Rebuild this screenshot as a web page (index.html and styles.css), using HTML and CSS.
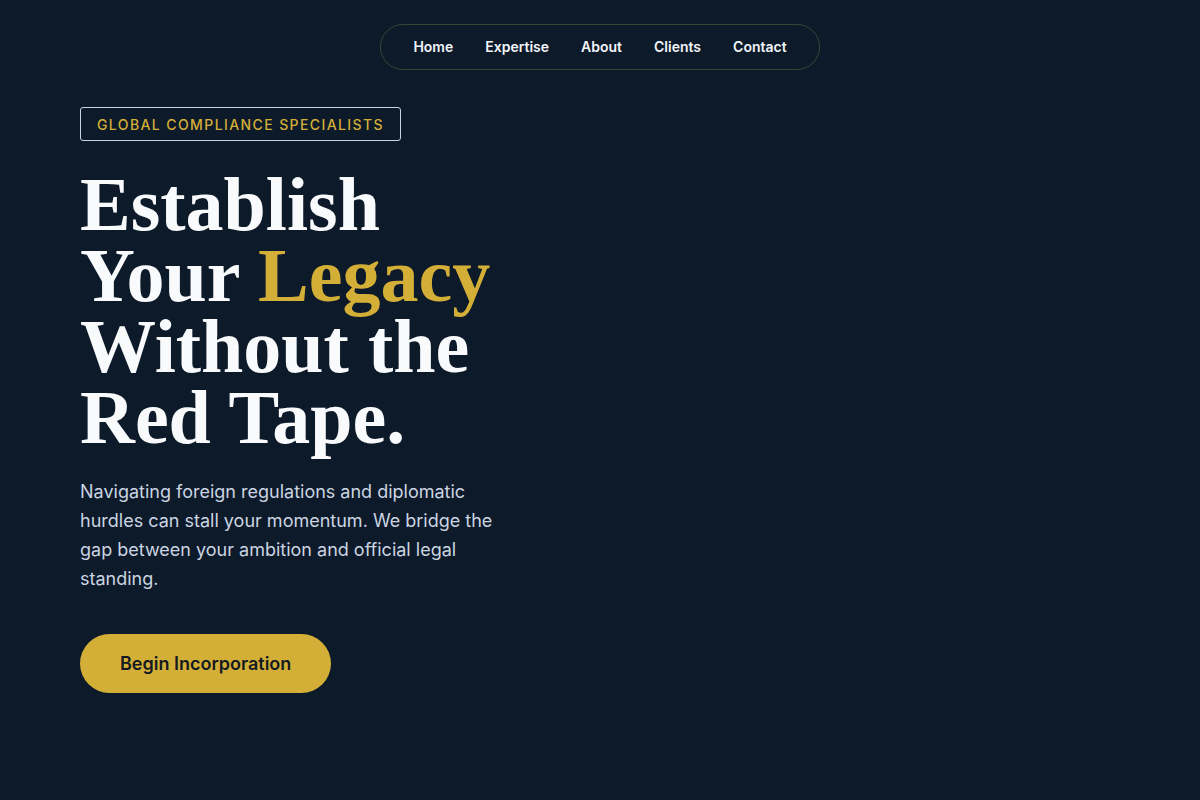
FILE: index.html
```html
<!DOCTYPE html>
<html lang="en">
<head>
<meta charset="utf-8">
<title>Global Compliance Specialists</title>
<link rel="stylesheet" href="styles.css">
</head>
<body>
<header class="top">
  <nav class="nav">
    <a href="#">Home</a>
    <a href="#">Expertise</a>
    <a href="#">About</a>
    <a href="#">Clients</a>
    <a href="#">Contact</a>
  </nav>
</header>
<main class="hero">
  <div class="badge">Global Compliance Specialists</div>
  <h1 class="title">Establish<br>Your <span class="gold">Legacy</span><br>Without the<br>Red Tape.</h1>
  <p class="lead">Navigating foreign regulations and diplomatic hurdles can stall your momentum. We bridge the gap between your ambition and official legal standing.</p>
  <a class="cta" href="#">Begin Incorporation</a>
</main>
</body>
</html>
```
FILE: styles.css
```css
* { box-sizing: border-box; }
html, body { margin: 0; padding: 0; }
body {
  background: #0d1a2a;
  color: #f8fafc;
  font-family: Inter, "Noto Sans", sans-serif;
  height: 800px;
  overflow: hidden;
}
.top {
  display: flex;
  justify-content: center;
  padding-top: 24px;
}
.nav {
  display: flex;
  gap: 32px;
  height: 46px;
  align-items: center;
  padding: 0 32px 2px;
  border: 1px solid #3a4536;
  border-radius: 999px;
}
.nav a {
  color: #f1f5f9;
  text-decoration: none;
  font-size: 14px;
  font-weight: 600;
}
.hero {
  padding: 37px 80px 0;
  display: flex;
  flex-direction: column;
  align-items: flex-start;
}
.badge {
  border: 1px solid #cbd5e1;
  border-radius: 3px;
  color: #d4af37;
  font-size: 14px;
  letter-spacing: 0.1em;
  text-transform: uppercase;
  padding: 0 16px;
  height: 34px;
  display: flex;
  align-items: center;
  font-weight: 500;
}
.title {
  margin: 28px 0 0;
  font-family: "Liberation Serif", "DejaVu Serif", serif;
  font-weight: 700;
  font-size: 76px;
  line-height: 71px;
  color: #f8fafc;
}
.gold { color: #d4af37; }
.lead {
  margin: 24px 0 0;
  max-width: 420px;
  font-size: 18px;
  line-height: 29px;
  color: #cbd5e1;
}
.cta {
  margin-top: 41px;
  background: #d4af37;
  color: #141a22;
  text-decoration: none;
  font-size: 18px;
  font-weight: 600;
  height: 59px;
  padding: 0 40px;
  border-radius: 999px;
  display: flex;
  align-items: center;
}
```
